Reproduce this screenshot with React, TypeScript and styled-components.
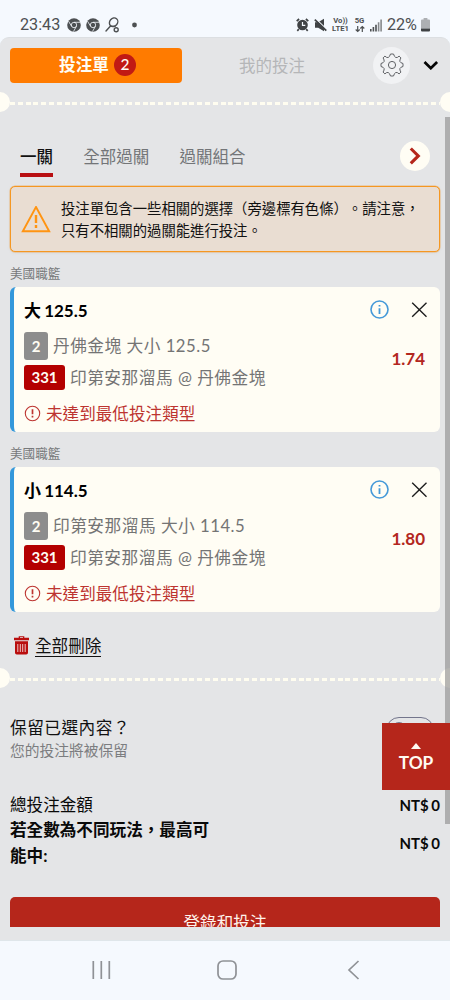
import React from "react";
import styled, { createGlobalStyle } from "styled-components";

const GlobalStyle = createGlobalStyle`
  *, *::before, *::after { box-sizing: border-box; }
  body { margin: 0; background: #f5f9fe; }
`;

const Screen = styled.div`
  position: relative;
  display: flex;
  flex-direction: column;
  width: 450px;
  height: 1000px;
  overflow: hidden;
  background: #f5f9fe;
  color: #111;
  font-family: Lato, "Noto Sans CJK TC", sans-serif;
  font-size: 16.67px;
  white-space: nowrap;
  text-spacing-trim: space-all;
`;

const StatusBar = styled.div`
  display: flex;
  justify-content: space-between;
  height: 37px;
  flex: none;
  padding: 12px 20px 0 20px;
  font: 16.2px/26px Roboto, sans-serif;
  color: #4d5052;
`;

const StatusGroup = styled.div<{ $gap: number }>`
  display: flex;
  align-items: center;
  height: 26px;
  gap: ${(p) => p.$gap}px;
`;

const Clock = styled.span`
  width: 41px;
  margin-right: 1px;
`;

const StackedLabel = styled.span<{ $width: number }>`
  display: flex;
  flex-direction: column;
  align-items: center;
  width: ${(p) => p.$width}px;
  font-size: 7.7px;
  font-weight: 700;
  line-height: 7.6px;
`;

const Percent = styled.span`
  width: 32px;
  margin-right: -3px;
  letter-spacing: -0.1px;
`;

const Sheet = styled.main`
  height: 903px;
  flex: none;
  padding-bottom: 13px;
  background: #e4e5e7;
  border-radius: 9px 9px 0 0;
  border-top: 1px solid #dcdfe2;
`;

const SheetBody = styled.div`
  height: 889px;
  overflow: hidden;
`;

const Header = styled.header`
  display: flex;
  align-items: center;
  height: 54px;
  padding: 0 11px 0 10px;
`;

const SlipButton = styled.button`
  display: flex;
  align-items: center;
  justify-content: center;
  gap: 5px;
  width: 172px;
  height: 35px;
  padding: 0 0 0 3px;
  border: 0;
  border-radius: 4px;
  background: #ff7b00;
  color: #fffdf5;
  font: 700 16.67px/24px Lato, "Noto Sans CJK TC", sans-serif;
`;

const Count = styled.span`
  width: 22px;
  height: 22px;
  border-radius: 50%;
  background: #c11a14;
  font-size: 15.5px;
  font-weight: 500;
  line-height: 21.5px;
  text-align: center;
`;

const MyBets = styled.div`
  flex: 1;
  padding: 0 11px 0 0;
  text-align: center;
  color: #b5b6b8;
  font-size: 16.5px;
`;

const GearButton = styled.div`
  display: flex;
  align-items: center;
  justify-content: center;
  width: 37px;
  height: 37px;
  margin-right: 13px;
  border-radius: 50%;
  background: #f1f2f4;
`;

const Perforation = styled.div`
  display: flex;
  align-items: center;
  height: 20px;
  margin: 0 -5px;
`;

const Notch = styled.span<{ $side: "left" | "right" }>`
  flex: none;
  width: 20px;
  height: 20px;
  border-radius: 50%;
  background: #fffdf4;
  margin-left: ${(p) => (p.$side === "left" ? -5 : 0)}px;
  margin-right: ${(p) => (p.$side === "right" ? -5 : 0)}px;
`;

const Dashes = styled.span`
  flex: 1;
  height: 3px;
  margin-top: 2px;
  background: repeating-linear-gradient(90deg, #fffdf0 0 5px, #e4e5e7 5px 7.8px);
`;

const Tabs = styled.nav`
  display: flex;
  align-items: flex-start;
  height: 73px;
  padding: 29px 20px 0 20px;
  gap: 30.3px;
`;

const Tab = styled.div<{ $active?: boolean }>`
  height: 36px;
  border-bottom: ${(p) => (p.$active ? "4px solid #b80f12" : "4px solid transparent")};
  color: ${(p) => (p.$active ? "#111" : "#737578")};
  font-weight: ${(p) => (p.$active ? 500 : 400)};
  font-size: 16.5px;
  line-height: 32px;
`;

const NextTab = styled.div`
  display: flex;
  align-items: center;
  justify-content: center;
  width: 30px;
  height: 30px;
  margin-left: auto;
  border-radius: 50%;
  background: #fffdf4;
`;

const Notice = styled.section`
  display: flex;
  align-items: center;
  gap: 10px;
  height: 66px;
  margin: 1px 10px 0;
  padding: 1px 0 0 10px;
  border: 1.5px solid #f59722;
  border-radius: 5px;
  background: #e9ddd2;
  box-shadow: 0 0 0 0.5px #f5972288, 0 1px 3px #c9c9c966;
  font-size: 14.35px;
  line-height: 22px;
`;

const League = styled.div`
  height: 35px;
  padding: 10px 10px 0;
  color: #77797b;
  font-size: 12.6px;
  line-height: 24px;
`;

const Card = styled.article`
  display: flex;
  justify-content: space-between;
  height: 145px;
  margin: 0 10px;
  padding: 10px 12px 0 10px;
  border-left: 4px solid #3498db;
  border-radius: 6px;
  background: #fffdf4;
`;

const Selection = styled.div`
  display: flex;
  flex-direction: column;
`;

const Pick = styled.h3`
  height: 27px;
  margin: 0 0 8px;
  color: #000;
  font-size: 17px;
  line-height: 27px;
  word-spacing: -1px;
`;

const Line = styled.div<{ $height: number; $gap: number }>`
  display: flex;
  align-items: center;
  gap: ${(p) => p.$gap}px;
  height: ${(p) => p.$height}px;
  margin-bottom: 5px;
  color: #747474;
  font-size: 16.7px;
  letter-spacing: 0.5px;
`;

const LineText = styled.span`
  height: 24px;
  line-height: 24px;
`;

const Badge = styled.span<{ $tone: "grey" | "red" }>`
  width: ${(p) => (p.$tone === "grey" ? 24 : 41)}px;
  height: ${(p) => (p.$tone === "grey" ? 28 : 25)}px;
  border-radius: 3px;
  background: ${(p) => (p.$tone === "grey" ? "#8d8d8d" : "#b40000")};
  color: #fffdf4;
  font-size: 15px;
  font-weight: 700;
  line-height: ${(p) => (p.$tone === "grey" ? 28 : 25)}px;
  letter-spacing: 0;
  text-align: center;
`;

const ErrorLine = styled.div`
  display: flex;
  align-items: center;
  gap: 5px;
  height: 24px;
  margin-top: 6px;
  color: #bd3430;
  font-size: 16.6px;
`;

const CardSide = styled.div`
  display: flex;
  flex-direction: column;
  align-items: flex-end;
`;

const CardActions = styled.div`
  display: flex;
  align-items: center;
  gap: 22px;
  height: 25px;
`;

const Odds = styled.strong`
  margin: 26px 3px 0 0;
  color: #b3271e;
  font-size: 17px;
  line-height: 22px;
`;

const DeleteAll = styled.div`
  display: flex;
  align-items: center;
  gap: 6px;
  height: 56px;
  padding: 11px 14px 0;
`;

const DeleteLink = styled.span`
  height: 22px;
  border-bottom: 1.5px solid #111;
  font-size: 16.6px;
  line-height: 23px;
`;

const KeepRow = styled.section`
  display: flex;
  justify-content: space-between;
  height: 76px;
  margin-top: 28px;
  padding: 0 16px 0 10px;
`;

const KeepTitle = styled.div`
  height: 24px;
  font-size: 16.67px;
  line-height: 24px;
  letter-spacing: 0.5px;
`;

const KeepHint = styled.div`
  color: #7c7d80;
  font-size: 14.75px;
  line-height: 20px;
`;

const Toggle = styled.div`
  width: 48px;
  height: 26px;
  margin-top: 1px;
  padding: 4px;
  border: 1px solid #73758c;
  border-radius: 14px;

  &::before {
    content: "";
    display: block;
    width: 16px;
    height: 16px;
    border: 1px solid #73758c;
    border-radius: 50%;
  }
`;

const Total = styled.div<{ $strong?: boolean }>`
  display: flex;
  align-items: center;
  justify-content: space-between;
  height: ${(p) => (p.$strong ? 52 : 25)}px;
  padding: 0 10px;
  color: #090909;
  font-weight: ${(p) => (p.$strong ? 700 : 400)};
  font-size: 16.6px;
  line-height: 26px;
`;

const TotalLabel = styled.span`
  width: 215px;
  white-space: normal;
`;

const Amount = styled.span`
  font-size: 15px;
  font-weight: 700;
  word-spacing: -1px;
`;

const LoginButton = styled.button`
  display: block;
  width: 430px;
  height: 50px;
  margin: 28px 10px 0;
  padding: 1px 0 0;
  border: 0;
  border-radius: 5px;
  background: #b5261b;
  color: #fff3ec;
  font: 16.6px/24px Lato, "Noto Sans CJK TC", sans-serif;
`;

const ScrollThumb = styled.div`
  position: absolute;
  top: 117px;
  right: 0;
  width: 5px;
  height: 707px;
  background: #919191a6;
`;

const TopButton = styled.div`
  position: absolute;
  top: 723px;
  right: 0;
  display: flex;
  flex-direction: column;
  align-items: center;
  width: 68px;
  height: 67px;
  padding-top: 20px;
  background: #b5261b;
  color: #fffaf2;
  font-size: 17.3px;
  font-weight: 700;
  line-height: 28px;
`;

const NavBar = styled.footer`
  display: flex;
  align-items: center;
  justify-content: space-between;
  height: 60px;
  padding: 0 90px 2px;
  border-top: 1px solid #dfe6ea;
`;

const HomeIcon = styled.svg`
  margin-right: 5px;
`;

const ChromeIcon = () => (
  <svg width="14" height="14" viewBox="0 0 14 14" fill="none">
    <circle cx="7" cy="7" r="6.8" fill="#4d5052" />
    <circle cx="7" cy="7" r="2.7" stroke="#f5f9fe" strokeWidth="0.8" />
    <path d="M7 4.3h6M4.6 8.3 1.5 3.2M9.4 8.3 6.5 13.5" stroke="#f5f9fe" strokeWidth="0.8" />
  </svg>
);

const RacketIcon = () => (
  <svg width="15" height="16" viewBox="0 0 15 16" fill="none" stroke="#4d5052" strokeWidth="1.4">
    <ellipse cx="8.6" cy="5.3" rx="3.9" ry="4.6" transform="rotate(40 8.6 5.3)" />
    <path d="M5.3 9.2 1 14M5.3 9.2l5-.1" strokeLinecap="round" />
    <circle cx="11.2" cy="12.8" r="2" />
  </svg>
);

const AlarmIcon = () => (
  <svg width="13" height="14" viewBox="0 0 13 14" fill="none">
    <path d="M.7 3.2 3.1 1M12.3 3.2 9.9 1M2.8 11.2l-1.5 1.6M10.2 11.2l1.5 1.6" stroke="#3f4244" strokeWidth="1.7" />
    <circle cx="6.5" cy="7" r="5.3" fill="#3f4244" />
    <path d="M6.5 4v3.4h2.8" stroke="#f5f9fe" strokeWidth="1.2" />
  </svg>
);

const MuteIcon = () => (
  <svg width="13" height="14" viewBox="0 0 13 14">
    <path d="M1 4.3h3.2L10 .8v12.4L4.2 9.7H1z" fill="#3f4244" />
    <path d="m1.6.6 11.4 10.9" stroke="#f5f9fe" strokeWidth="1.2" />
    <path d="m.8 1.6 11.5 11" stroke="#3f4244" strokeWidth="1.7" />
  </svg>
);

const DataArrows = () => (
  <svg width="10" height="8" viewBox="0 0 10 8" fill="none" stroke="#4d5052" strokeWidth="1.2">
    <path d="M2.7 1v5.5M.7 4.5l2 2 2-2M7.3 7V1.5M5.3 3.5l2-2 2 2" />
  </svg>
);

const SignalIcon = () => (
  <svg width="12" height="13" viewBox="0 0 12 13">
    <path d="M0 10h1.6v2.5H0zM2.6 8h1.6v4.5H2.6zM5.2 5.7h1.6v6.8H5.2z" fill="#4d5052" />
    <path d="M7.8 3.2h1.6v9.3H7.8zM10.3.4h1.6v12.1h-1.6z" fill="#85888a" />
  </svg>
);

const BatteryIcon = () => (
  <svg width="9" height="14" viewBox="0 0 9 14">
    <path d="M2.6 0h3.8v1.5H8q1 0 1 1v8H0v-8q0-1 1-1h1.6z" fill="#adb0b3" />
    <path d="M0 10.5h9v2q0 1-1 1H1q-1 0-1-1z" fill="#3f4244" />
  </svg>
);

const GearIcon = () => (
  <svg width="24" height="24" viewBox="-12 -12 24 24" fill="none" stroke="#606266" strokeWidth="1" strokeLinejoin="round">
    <path d="M-1.5-11H1.5Q2.3-8.1 3.8-7.5T7.1-8.9L8.9-7.1Q7.5-4.8 7.9-3.5T11-1.5V1.5Q8.3 2.2 7.9 3.5T8.9 7.1L7.1 8.9Q5.3 7 3.8 7.5T1.5 11H-1.5Q-2.3 8.1-3.8 7.5T-7.1 8.9L-8.9 7.1Q-7.5 4.8-7.9 3.5T-11 1.5V-1.5Q-8.3-2.2-7.9-3.5T-8.9-7.1L-7.1-8.9Q-5.3-7-3.8-7.5T-1.5-11Z" />
    <circle r="3.6" />
  </svg>
);

const ChevronDown = () => (
  <svg width="16" height="10" viewBox="0 0 16 10" fill="none">
    <path d="m1.5 2 6.3 6.2L14.1 2" stroke="#050505" strokeWidth="2.7" />
  </svg>
);

const ChevronRight = () => (
  <svg width="12" height="18" viewBox="0 0 12 18" fill="none">
    <path d="m1.8 1.5 7.5 7.4-7.5 7.4" stroke="#b5261b" strokeWidth="3.1" />
  </svg>
);

const WarningIcon = () => (
  <svg width="30" height="28" viewBox="0 0 30 28" fill="none">
    <path d="M15 1 28.2 25.3H1.8z" stroke="#ff9412" strokeWidth="1.9" />
    <path d="M15 9v8M15 19v3" stroke="#ff9412" strokeWidth="2.4" />
  </svg>
);

const InfoIcon = () => (
  <svg width="19" height="19" viewBox="0 0 19 19" fill="none" stroke="#4599d8">
    <circle cx="9.5" cy="9.5" r="8.5" strokeWidth="1.6" />
    <path d="M9.5 8.3v5.6M9.5 5v1.6" strokeWidth="1.8" />
  </svg>
);

const CloseIcon = () => (
  <svg width="17" height="17" viewBox="0 0 17 17">
    <path d="m1.2 1.7 14.3 14M15.5 1.7 1.2 15.7" stroke="#1c1c1c" strokeWidth="1.35" />
  </svg>
);

const ErrorIcon = () => (
  <svg width="17" height="17" viewBox="0 0 17 17" fill="none" stroke="#bd3430">
    <circle cx="8.5" cy="8.5" r="7.2" strokeWidth="1.1" />
    <path d="M8.5 4.3v5M8.5 10.8v1.8" strokeWidth="1.7" />
  </svg>
);

const TrashIcon = () => (
  <svg width="15" height="19" viewBox="0 0 15 19">
    <path d="M0 1.8h4.7V.2h5.6v1.6H15v2.5H0zM6 1.2v.8h3v-.8z" fill="#b90e0e" fillRule="evenodd" />
    <path d="M1 5.2h13v11.6q0 1.8-1.8 1.8H2.8Q1 18.6 1 16.8z" fill="#b90e0e" />
    <path d="M3.8 8v8M6.3 8v8M8.7 8v8M11.2 8v8" stroke="#f3dada" strokeWidth="0.9" />
  </svg>
);

const Divider = () => (
  <Perforation>
    <Notch $side="left" />
    <Dashes />
    <Notch $side="right" />
  </Perforation>
);

const bets = [
  { pick: "大 125.5", market: "丹佛金塊 大小 125.5", odds: "1.74" },
  { pick: "小 114.5", market: "印第安那溜馬 大小 114.5", odds: "1.80" },
];

const BetCard = ({ pick, market, odds }: (typeof bets)[number]) => (
  <>
    <League>美國職籃</League>
    <Card>
      <Selection>
        <Pick>{pick}</Pick>
        <Line $height={28} $gap={5}>
          <Badge $tone="grey">2</Badge>
          <LineText>{market}</LineText>
        </Line>
        <Line $height={25} $gap={5}>
          <Badge $tone="red">331</Badge>
          <LineText>印第安那溜馬 @ 丹佛金塊</LineText>
        </Line>
        <ErrorLine>
          <ErrorIcon />
          未達到最低投注類型
        </ErrorLine>
      </Selection>
      <CardSide>
        <CardActions>
          <InfoIcon />
          <CloseIcon />
        </CardActions>
        <Odds>{odds}</Odds>
      </CardSide>
    </Card>
  </>
);

export default function App() {
  return (
    <Screen>
      <GlobalStyle />
      <StatusBar>
        <StatusGroup $gap={5}>
          <Clock>23:43</Clock>
          <ChromeIcon />
          <ChromeIcon />
          <RacketIcon />
          <svg width="16" height="6" viewBox="0 0 16 6">
            <circle cx="9.5" cy="3" r="2.4" fill="#4d5052" />
          </svg>
        </StatusGroup>
        <StatusGroup $gap={5}>
          <AlarmIcon />
          <MuteIcon />
          <StackedLabel $width={17}>
            <span>Vo))</span>
            <span>LTE1</span>
          </StackedLabel>
          <StackedLabel $width={11}>
            <span>5G</span>
            <DataArrows />
          </StackedLabel>
          <SignalIcon />
          <Percent>22%</Percent>
          <BatteryIcon />
        </StatusGroup>
      </StatusBar>
      <Sheet>
        <SheetBody>
          <Header>
            <SlipButton>
              投注單<Count>2</Count>
            </SlipButton>
            <MyBets>我的投注</MyBets>
            <GearButton>
              <GearIcon />
            </GearButton>
            <ChevronDown />
          </Header>
          <Divider />
          <Tabs>
            <Tab $active>一關</Tab>
            <Tab>全部過關</Tab>
            <Tab>過關組合</Tab>
            <NextTab>
              <ChevronRight />
            </NextTab>
          </Tabs>
          <Notice>
            <WarningIcon />
            <div>
              投注單包含一些相關的選擇（旁邊標有色條）。請注意，
              <br />
              只有不相關的過關能進行投注。
            </div>
          </Notice>
          {bets.map((bet) => (
            <BetCard key={bet.pick} {...bet} />
          ))}
          <DeleteAll>
            <TrashIcon />
            <DeleteLink>全部刪除</DeleteLink>
          </DeleteAll>
          <Divider />
          <KeepRow>
            <div>
              <KeepTitle>保留已選內容？</KeepTitle>
              <KeepHint>您的投注將被保留</KeepHint>
            </div>
            <Toggle />
          </KeepRow>
          <Total>
            <TotalLabel>總投注金額</TotalLabel>
            <Amount>NT$ 0</Amount>
          </Total>
          <Total $strong>
            <TotalLabel>若全數為不同玩法，最高可能中:</TotalLabel>
            <Amount>NT$ 0</Amount>
          </Total>
          <LoginButton>登錄和投注</LoginButton>
        </SheetBody>
      </Sheet>
      <NavBar>
        <svg width="22" height="20" viewBox="0 0 22 20">
          <path d="M3.3 1v18M11.3 1v18M19.3 1v18" stroke="#8f9296" strokeWidth="1.7" />
        </svg>
        <HomeIcon width="20" height="20" viewBox="0 0 20 20">
          <rect x="1" y="1" width="18" height="18" rx="5" fill="none" stroke="#8f9296" strokeWidth="1.7" />
        </HomeIcon>
        <svg width="13" height="20" viewBox="0 0 13 20">
          <path d="m11.5 1-9.5 9 9.5 9" fill="none" stroke="#8f9296" strokeWidth="1.7" />
        </svg>
      </NavBar>
      <ScrollThumb />
      <TopButton>
        <svg width="10" height="6" viewBox="0 0 10 6">
          <path d="m5 0 5 6H0z" fill="#fffaf2" />
        </svg>
        <span>TOP</span>
      </TopButton>
    </Screen>
  );
}
